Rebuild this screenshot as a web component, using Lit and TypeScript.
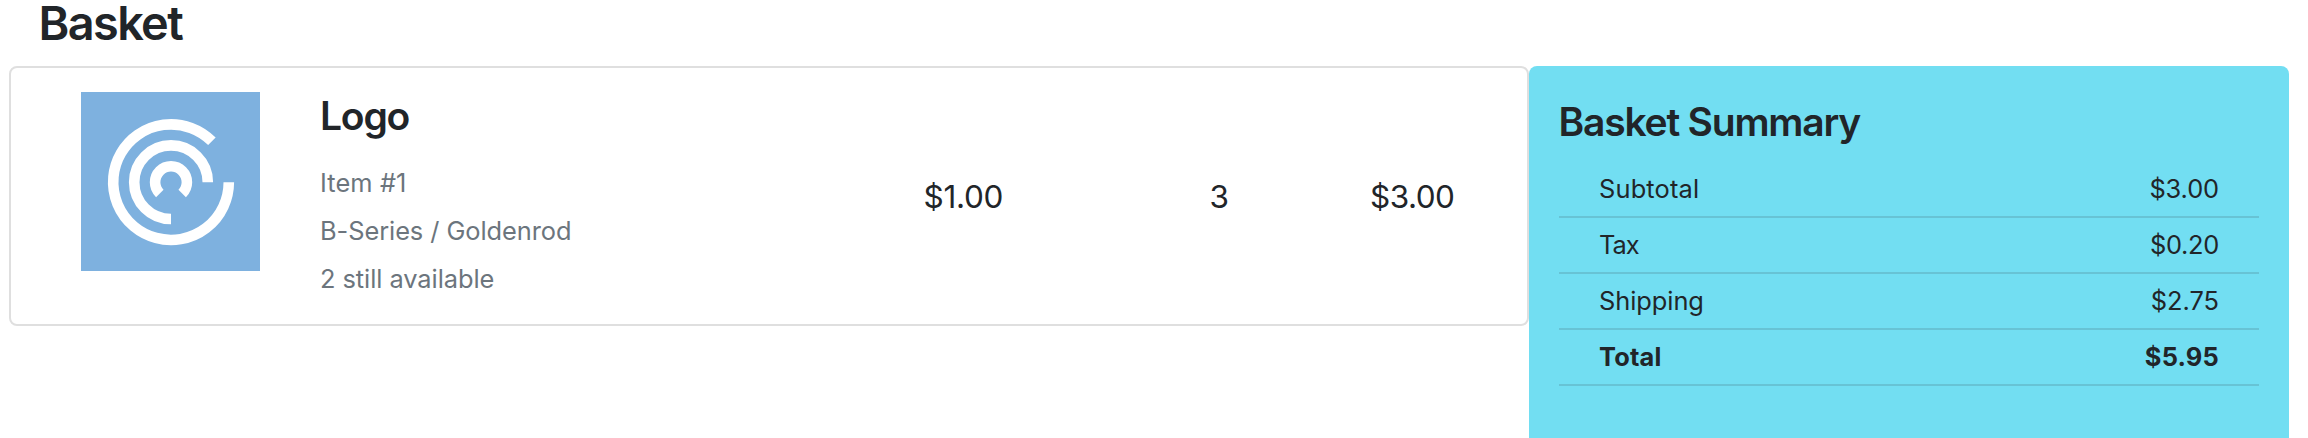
import { LitElement, html, css } from "lit";
import { customElement } from "lit/decorators.js";
import { classMap } from "lit/directives/class-map.js";
import { styleMap } from "lit/directives/style-map.js";

interface SummaryRow {
  label: string;
  amount: string;
  labelTracking: number;
  amountTracking: number;
  total?: boolean;
}

const summaryRows: SummaryRow[] = [
  { label: "Subtotal", amount: "$3.00", labelTracking: 0.17, amountTracking: -0.1 },
  { label: "Tax", amount: "$0.20", labelTracking: -1, amountTracking: -0.3 },
  { label: "Shipping", amount: "$2.75", labelTracking: -0.05, amountTracking: 0 },
  { label: "Total", amount: "$5.95", labelTracking: 0.2, amountTracking: 0.2, total: true },
];

@customElement("basket-item")
export class BasketItem extends LitElement {
  static styles = css`
    :host { display: block; }
    .card {
      box-sizing: border-box;
      height: 260px;
      border: 2px solid #dfdfdf;
      border-radius: 8px;
      display: grid;
      grid-template-columns: 309px 603.5px 286px 160.5px 1fr;
      align-items: start;
    }
    .thumb { display: block; width: 179px; height: 179px; margin: 24px 0 0 70px; }
    .info { padding-top: 24px; }
    .name { margin: 0 0 19px; font-size: 39px; line-height: 48px; font-weight: 600; letter-spacing: -1.2px; }
    .meta { font-size: 25.4px; line-height: 48px; color: #6c757d; letter-spacing: -0.06px; }
    .number { letter-spacing: 0.1px; }
    .figure { padding-top: 104.5px; font-size: 31.5px; line-height: 48px; letter-spacing: -0.5px; }
    .unit { letter-spacing: -0.3px; }
  `;

  render() {
    return html`
      <div class="card">
        <svg class="thumb" viewBox="0 0 179 179" role="img" aria-label="Logo">
          <rect width="179" height="179" fill="#7eb1df" />
          <g transform="translate(90 90.2)" fill="none" stroke="#fff" stroke-width="10.6">
            <path d="M40.9 -40.9A57.8 57.8 0 1 0 57.8 0" />
            <path d="M0 36.8A36.8 36.8 0 1 1 36.8 0" />
            <path d="M-11.2 11.2A15.9 15.9 0 1 1 11.2 11.2" />
          </g>
        </svg>
        <div class="info">
          <h4 class="name">Logo</h4>
          <div class="meta number">Item #1</div>
          <div class="meta">B-Series / Goldenrod</div>
          <div class="meta">2 still available</div>
        </div>
        <div class="figure unit">$1.00</div>
        <div class="figure">3</div>
        <div class="figure">$3.00</div>
      </div>
    `;
  }
}

@customElement("basket-summary")
export class BasketSummary extends LitElement {
  static styles = css`
    :host { display: block; }
    .panel {
      box-sizing: border-box;
      height: 100%;
      padding: 32px 30px 0;
      background: #72def2;
      border-radius: 8px 8px 0 0;
    }
    .title { margin: 0 0 16px; font-size: 39px; line-height: 48px; font-weight: 600; letter-spacing: -1.2px; text-indent: -0.5px; }
    .row {
      display: flex;
      justify-content: space-between;
      padding: 0 40px;
      border-bottom: 2px solid #67c3d5;
      font-size: 25.4px;
      line-height: 54px;
    }
    .total { font-weight: 700; }
  `;

  render() {
    return html`
      <section class="panel">
        <h3 class="title">Basket Summary</h3>
        ${summaryRows.map(
          (r) => html`
            <div class=${classMap({ row: true, total: !!r.total })}>
              <span style=${styleMap({ letterSpacing: `${r.labelTracking}px` })}>${r.label}</span>
              <span style=${styleMap({ letterSpacing: `${r.amountTracking}px` })}>${r.amount}</span>
            </div>
          `,
        )}
      </section>
    `;
  }
}

@customElement("app-root")
export class AppRoot extends LitElement {
  static styles = css`
    :host {
      display: flex;
      flex-direction: column;
      height: 100vh;
      overflow: hidden;
      background: #fff;
      color: #212529;
      font-family: Inter, "Liberation Sans", sans-serif;
    }
    .heading {
      flex: none;
      margin: 0;
      padding: 0 0 20px 38.5px;
      font-size: 46.8px;
      line-height: 46px;
      font-weight: 600;
      letter-spacing: -1.6px;
    }
    .columns {
      flex: 1;
      display: grid;
      grid-template-columns: 1520px 760px;
      padding-left: 9px;
    }
  `;

  render() {
    return html`
      <h2 class="heading">Basket</h2>
      <div class="columns">
        <basket-item></basket-item>
        <basket-summary></basket-summary>
      </div>
    `;
  }
}
